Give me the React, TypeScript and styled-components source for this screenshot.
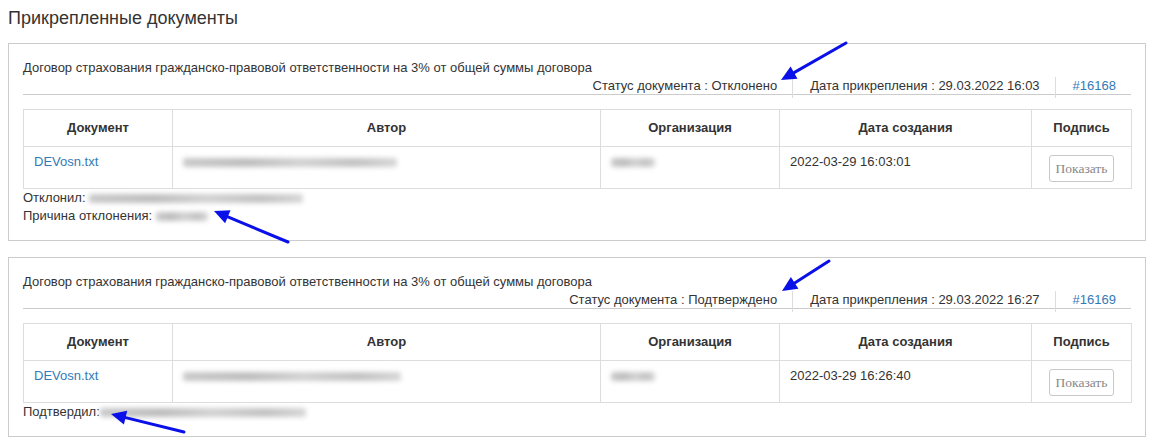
import React from "react";
import styled, { createGlobalStyle } from "styled-components";

const GlobalStyle = createGlobalStyle`
  html, body {
    margin: 0;
    padding: 0;
    background: #fff;
  }
  body {
    font-family: "Liberation Sans", Arial, sans-serif;
    font-size: 13px;
    color: #333;
  }
`;

const Page = styled.div`
  position: relative;
  padding: 8px 10px 8px 8px;
`;

const Heading = styled.h3`
  margin: 0 0 15px;
  font-size: 18px;
  font-weight: normal;
  line-height: 20px;
  color: #333;
`;

const Panel = styled.section`
  border: 1px solid #ccc;
  padding: 14px 14px 15px;
  & + & {
    margin-top: 16px;
  }
`;

const DocTitle = styled.div`
  line-height: 19px;
`;

const StatusRow = styled.div`
  display: flex;
  justify-content: flex-end;
  border-bottom: 1px solid #ccc;
  margin-bottom: 14px;
`;

const StatusItem = styled.div<{ $first?: boolean }>`
  line-height: 17px;
  padding: 0 15px 4px 17px;
  margin-bottom: -4px;
  border-left: ${(p) => (p.$first ? "none" : "1px solid #ddd")};
`;

const Link = styled.a`
  color: #337ab7;
  text-decoration: none;
`;

const Table = styled.table`
  width: 100%;
  border-collapse: collapse;
  table-layout: fixed;
  border: 1px solid #ddd;
`;

const Col = styled.col<{ $w: number }>`
  width: ${(p) => p.$w}px;
`;

const Th = styled.th`
  border: 1px solid #ddd;
  padding: 8px 10px;
  line-height: 20px;
  font-weight: bold;
  text-align: center;
  color: #333;
`;

const Td = styled.td<{ $center?: boolean }>`
  border: 1px solid #ddd;
  padding: 8px 10px 6px;
  line-height: 14px;
  vertical-align: top;
  text-align: ${(p) => (p.$center ? "center" : "left")};
`;

const Blurred = styled.span<{ $w: number }>`
  display: inline-block;
  width: ${(p) => p.$w}px;
  height: 9px;
  vertical-align: middle;
  background: linear-gradient(90deg, #c9c9c9, #bdbdbd 30%, #d2d2d2 55%, #c2c2c2 80%, #d6d6d6);
  filter: blur(2.5px);
  border-radius: 3px;
`;

const ShowButton = styled.button`
  display: inline-block;
  vertical-align: top;
  font-family: "Liberation Serif", "Times New Roman", serif;
  font-size: 13.5px;
  color: #888;
  background: #fff;
  border: 1px solid #c8c8c8;
  border-radius: 3px;
  padding: 5px 6px 4px;
  line-height: 16px;
  cursor: pointer;
`;

const Note = styled.div`
  line-height: 18px;
`;

const Annotations = styled.svg`
  position: absolute;
  left: 0;
  top: 0;
  pointer-events: none;
`;

type Doc = {
  status: string;
  attached: string;
  id: string;
  created: string;
  authorW: number;
  orgW: number;
  notes: { label: string; w: number }[];
};

const docs: Doc[] = [
  {
    status: "Отклонено",
    attached: "29.03.2022 16:03",
    id: "#16168",
    created: "2022-03-29 16:03:01",
    authorW: 214,
    orgW: 44,
    notes: [
      { label: "Отклонил: ", w: 214 },
      { label: "Причина отклонения: ", w: 52 },
    ],
  },
  {
    status: "Подтверждено",
    attached: "29.03.2022 16:27",
    id: "#16169",
    created: "2022-03-29 16:26:40",
    authorW: 218,
    orgW: 44,
    notes: [{ label: "Подтвердил:", w: 206 }],
  },
];

const Arrow = ({ x1, y1, x2, y2 }: { x1: number; y1: number; x2: number; y2: number }) => {
  const a = Math.atan2(y2 - y1, x2 - x1);
  const len = 15;
  const wing = 7;
  const bx = x2 - len * Math.cos(a);
  const by = y2 - len * Math.sin(a);
  const px = -Math.sin(a) * wing;
  const py = Math.cos(a) * wing;
  return (
    <g>
      <line x1={x1} y1={y1} x2={bx} y2={by} stroke="#0a10e8" strokeWidth={3} strokeLinecap="round" />
      <polygon
        points={`${x2},${y2} ${bx + px},${by + py} ${bx - px},${by - py}`}
        fill="#0a10e8"
      />
    </g>
  );
};

const DocPanel = ({ doc }: { doc: Doc }) => (
  <Panel>
    <DocTitle>
      Договор страхования гражданско-правовой ответственности на 3% от общей суммы договора
    </DocTitle>
    <StatusRow>
      <StatusItem $first>Статус документа : {doc.status}</StatusItem>
      <StatusItem>Дата прикрепления : {doc.attached}</StatusItem>
      <StatusItem>
        <Link href="#">{doc.id}</Link>
      </StatusItem>
    </StatusRow>
    <Table>
      <colgroup>
        <Col $w={149} />
        <Col $w={428} />
        <Col $w={179} />
        <Col $w={252} />
        <Col $w={100} />
      </colgroup>
      <thead>
        <tr>
          <Th>Документ</Th>
          <Th>Автор</Th>
          <Th>Организация</Th>
          <Th>Дата создания</Th>
          <Th>Подпись</Th>
        </tr>
      </thead>
      <tbody>
        <tr>
          <Td>
            <Link href="#">DEVosn.txt</Link>
          </Td>
          <Td>
            <Blurred $w={doc.authorW} />
          </Td>
          <Td>
            <Blurred $w={doc.orgW} />
          </Td>
          <Td>{doc.created}</Td>
          <Td $center>
            <ShowButton>Показать</ShowButton>
          </Td>
        </tr>
      </tbody>
    </Table>
    {doc.notes.map((n) => (
      <Note key={n.label}>
        {n.label}
        <Blurred $w={n.w} />
      </Note>
    ))}
  </Panel>
);

export default function App() {
  return (
    <>
      <GlobalStyle />
      <Page>
        <Heading>Прикрепленные документы</Heading>
        {docs.map((d) => (
          <DocPanel key={d.id} doc={d} />
        ))}
        <Annotations width={1156} height={441} viewBox="0 0 1156 441">
          <Arrow x1={846} y1={43} x2={781} y2={80} />
          <Arrow x1={288} y1={242} x2={214} y2={211} />
          <Arrow x1={829} y1={261} x2={782} y2={291} />
          <Arrow x1={184} y1={432} x2={111} y2={414} />
        </Annotations>
      </Page>
    </>
  );
}
